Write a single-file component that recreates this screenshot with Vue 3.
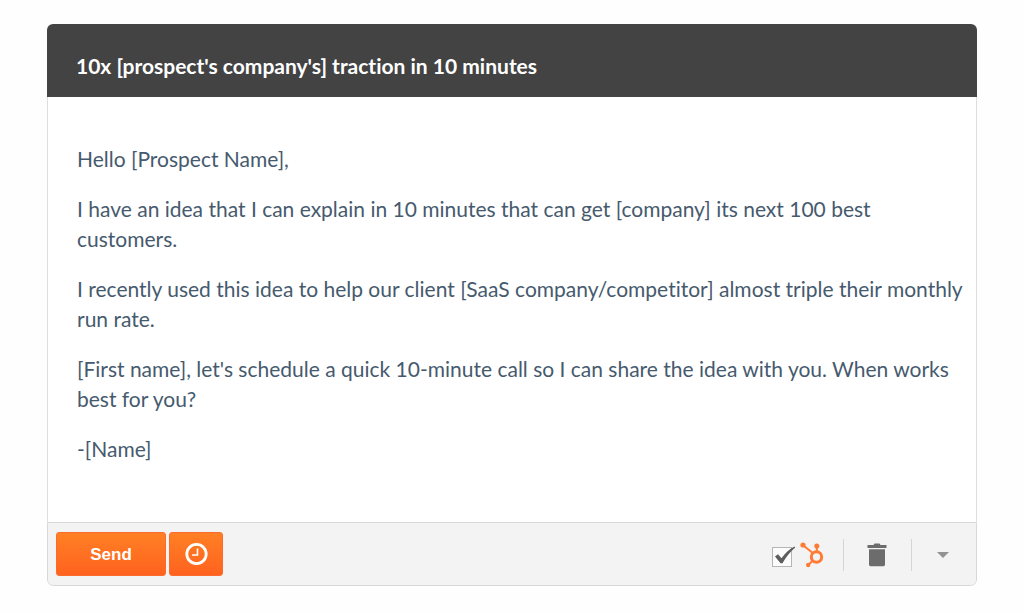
<template>
  <form class="composer" @submit.prevent="send">
    <header class="composer-header">
      <h1>{{ subject }}</h1>
    </header>

    <div class="composer-body">
      <p v-for="(paragraph, index) in paragraphs" :key="index">{{ paragraph }}</p>
    </div>

    <footer class="composer-footer">
      <div class="send-group">
        <button type="submit" class="btn btn-send">Send</button>
        <button type="button" class="btn btn-schedule" aria-label="Schedule">
          <svg width="24" height="24" viewBox="0 0 24 24" fill="none" stroke="#fff">
            <circle cx="12.5" cy="12" r="9.7" stroke-width="2.8" />
            <path d="M13.5 6.5V13H8" stroke-width="1.6" />
          </svg>
        </button>
      </div>

      <div class="tools">
        <label class="track">
          <span class="tick-box">
            <input type="checkbox" v-model="tracked" aria-label="Track email">
            <svg v-if="tracked" class="tick" width="22" height="20" viewBox="0 0 22 20">
              <path d="M1 10.5L4 8.3L7.5 12.2C11 7.5 15 3.4 20.5 0.6L21.2 1.6C16 6 12 11 8.5 17.2H6.5Z" fill="#5e5e5e" />
            </svg>
          </span>
          <svg width="24" height="26" viewBox="0 0 24 26" fill="none" stroke="#ff7a35">
            <path d="M3 3.2L12.5 10.8M16.8 4.5V10M13 18.5L8.2 23" stroke-width="2" />
            <circle cx="16.5" cy="15" r="5.2" stroke-width="3" />
            <circle cx="3" cy="3" r="2.6" fill="#ff7a35" stroke="none" />
            <circle cx="16.8" cy="4" r="2.5" fill="#ff7a35" stroke="none" />
            <circle cx="8.2" cy="23" r="2.2" fill="#ff7a35" stroke="none" />
          </svg>
        </label>
        <button type="button" class="tool tool-trash" aria-label="Discard">
          <svg width="20" height="24" viewBox="0 0 20 24" fill="#6c6c6c">
            <path d="M0.5 2H6.5L7.5 0.5H12.5L13.5 2H19.5V5H0.5Z" />
            <path d="M2 6.2H18V21.5Q18 23.2 16.5 23.2H3.5Q2 23.2 2 21.5Z" />
          </svg>
        </button>
        <button type="button" class="tool tool-more" aria-label="More options">
          <svg width="12" height="6" viewBox="0 0 12 6" fill="#929292">
            <path d="M0 0H12L6 6Z" />
          </svg>
        </button>
      </div>
    </footer>
  </form>
</template>

<script setup>
import { ref } from 'vue'

const subject = "10x [prospect's company's] traction in 10 minutes"

const paragraphs = [
  'Hello [Prospect Name],',
  'I have an idea that I can explain in 10 minutes that can get [company] its next 100 best customers.',
  'I recently used this idea to help our client [SaaS company/competitor] almost triple their monthly run rate.',
  "[First name], let's schedule a quick 10-minute call so I can share the idea with you. When works best for you?",
  '-[Name]',
]

const tracked = ref(true)
const sent = ref(false)

const send = () => {
  sent.value = true
}
</script>

<style>
body {
  margin: 0;
  background: #fefefe;
}
</style>

<style scoped>
.composer {
  margin: 24px 47px 26px;
  border-radius: 6px;
  overflow: hidden;
  background: #fff;
  font-family: Lato, 'Liberation Sans', sans-serif;
  font-variant-ligatures: none;
}
.composer-header {
  padding: 27px 29px 16px;
  background: #434343;
}
.composer-header h1 {
  margin: 0;
  font-size: 21px;
  line-height: 30px;
  font-weight: 700;
  color: #fff;
}
.composer-body {
  padding: 47px 8px 58px 29px;
  border: solid #dedede;
  border-width: 0 1px;
  font-size: 21px;
  line-height: 30px;
  color: #465a6e;
}
.composer-body p {
  margin: 0 0 20px;
}
.composer-body p:last-child {
  margin-bottom: 0;
}
.composer-footer {
  display: flex;
  align-items: center;
  justify-content: space-between;
  padding: 9px 8px;
  border: 1px solid #d8d8d8;
  border-radius: 0 0 6px 6px;
  background: #f3f3f3;
}
.send-group {
  display: flex;
  gap: 3px;
}
.btn {
  display: flex;
  align-items: center;
  justify-content: center;
  height: 44px;
  padding: 0;
  border: 1px solid #fb6b2c;
  border-radius: 3px;
  background: linear-gradient(#ff8024, #ff621f);
  color: #fff;
  font-family: 'Liberation Sans', sans-serif;
  font-size: 17px;
  font-weight: 700;
  cursor: pointer;
}
.btn-send {
  width: 110px;
  padding-top: 2px;
}
.btn-schedule {
  width: 54px;
}
.tools {
  display: flex;
  align-items: center;
  padding-top: 2px;
}
.track {
  display: flex;
  align-items: center;
  gap: 8px;
  padding-right: 19px;
}
.tick-box {
  position: relative;
  display: flex;
  padding-top: 4px;
}
.tick-box input {
  appearance: none;
  width: 20px;
  height: 20px;
  margin: 0;
  border: 1px solid #b5b5b5;
  background: #fcfcfc;
}
.tick {
  position: absolute;
  top: 3px;
  left: 2px;
}
.tool {
  display: flex;
  align-items: center;
  justify-content: center;
  height: 32px;
  padding: 0;
  border: none;
  border-left: 1px solid #d5d5d5;
  background: none;
  cursor: pointer;
}
.tool-trash {
  width: 68px;
  padding-right: 2px;
}
.tool-more {
  width: 57px;
  padding-left: 6px;
}
</style>
